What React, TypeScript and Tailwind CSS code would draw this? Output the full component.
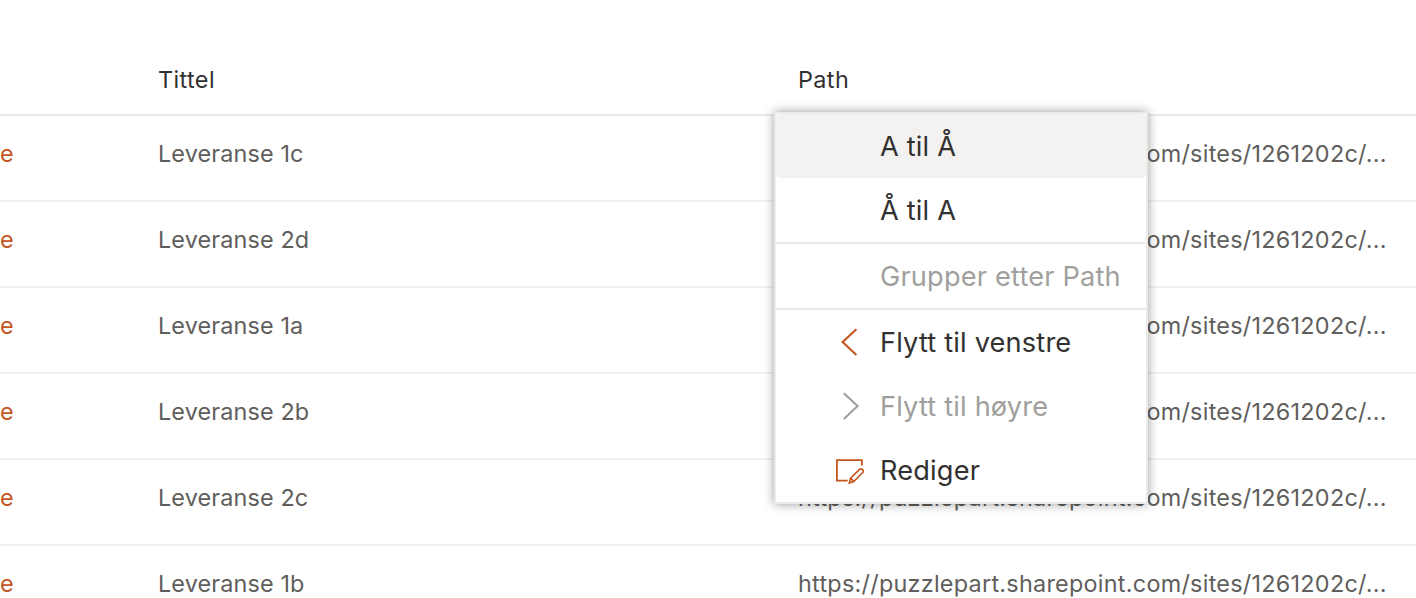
import React from "react";

const titles = ["Leveranse 1c", "Leveranse 2d", "Leveranse 1a", "Leveranse 2b", "Leveranse 2c", "Leveranse 1b"];
const path = "https://puzzlepart.sharepoint.com/sites/1261202c/...";

function ChevronLeft() {
  return (
    <svg width="30" height="32" viewBox="0 0 30 32" fill="none" stroke="currentColor" strokeWidth="2.1">
      <path d="M22.4 3.2 8.6 16.1l13.8 12.8" />
    </svg>
  );
}

function ChevronRight() {
  return (
    <svg width="30" height="32" viewBox="0 0 30 32" fill="none" stroke="currentColor" strokeWidth="2.1">
      <path d="M9.8 3.3 23.6 16.1 9.8 28.9" />
    </svg>
  );
}

function EditNote() {
  return (
    <svg width="30" height="32" viewBox="0 0 30 32" fill="none" stroke="currentColor" strokeWidth="1.8">
      <path d="M27.9 11.6V6.1H2.9v20.5h10.8" />
      <path d="m15.3 29 1.3-4.9 8.7-8.5a2.2 2.2 0 0 1 3.2 3.2l-8.7 8.8zM16.6 24.1l3.2 3.3" strokeWidth="1.6" />
    </svg>
  );
}

type ItemProps = { label: string; icon?: React.ReactNode; active?: boolean; disabled?: boolean };

function MenuItem({ label, icon, active, disabled }: ItemProps) {
  return (
    <button
      type="button"
      disabled={disabled}
      className={`flex h-16 w-full items-center pl-[58px] text-left ${active ? "rounded bg-[#f3f2f1]" : ""}`}
    >
      <span className={`mr-4 flex w-[30px] shrink-0 ${disabled ? "text-[#a19f9d]" : "text-[#c4551f]"}`}>{icon}</span>
      <span
        className={`pt-0.5 text-[27.2px] leading-8 tracking-[0.17px] whitespace-nowrap ${disabled ? "text-[#a19f9d]" : "text-[#323130]"}`}
      >
        {label}
      </span>
    </button>
  );
}

function Divider() {
  return <div className="h-0.5 bg-[#eaeaea]" />;
}

export default function App() {
  return (
    <div className="relative h-[598px] w-full overflow-hidden bg-white font-['Inter',sans-serif] text-[23.4px] leading-8 antialiased [font-feature-settings:'calt'_0,'liga'_0,'dlig'_0]">
      <div className="flex h-[116px] border-b-2 border-[#eaeaea] pt-16 tracking-[0.4px] text-[#323130]">
        <div className="w-[158px] shrink-0" />
        <div className="w-[640px] shrink-0">Tittel</div>
        <div>Path</div>
      </div>
      {titles.map((title) => (
        <div key={title} className="flex h-[86px] border-b-2 border-[#f3f2f1] pt-[22px] text-[#605e5c]">
          <div className="w-[158px] shrink-0 text-[#c4551f]">e</div>
          <div className="w-[640px] shrink-0 tracking-[0.14px]">{title}</div>
          <div className="tracking-[0.26px] whitespace-nowrap">{path}</div>
        </div>
      ))}
      <div className="absolute top-[112px] left-[774px] w-[374px] border-2 border-[#eaeaea] bg-white shadow-[0_0_10px_rgba(0,0,0,0.4)]">
        <MenuItem label="A til Å" active />
        <MenuItem label="Å til A" />
        <Divider />
        <MenuItem label="Grupper etter Path" disabled />
        <Divider />
        <MenuItem label="Flytt til venstre" icon={<ChevronLeft />} />
        <MenuItem label="Flytt til høyre" icon={<ChevronRight />} disabled />
        <MenuItem label="Rediger" icon={<EditNote />} />
      </div>
    </div>
  );
}
